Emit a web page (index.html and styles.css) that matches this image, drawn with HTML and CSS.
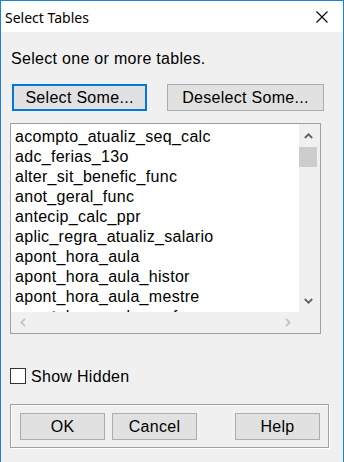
FILE: index.html
```html
<!DOCTYPE html>
<html>
<head>
<meta charset="utf-8">
<link rel="stylesheet" href="styles.css">
</head>
<body>
<div class="window">
  <div class="titlebar">
    <span class="title">Select Tables</span>
    <span class="close">
      <svg width="12" height="12" viewBox="0 0 12 12"><path d="M0.5 0.5 L11.5 11.5 M11.5 0.5 L0.5 11.5" stroke="#000" stroke-width="1.1" fill="none"/></svg>
    </span>
  </div>
  <div class="content">
    <div class="prompt">Select one or more tables.</div>
    <div class="btnrow">
      <button class="btn btn-default btn-select">Select Some...</button>
      <button class="btn btn-deselect">Deselect Some...</button>
    </div>
    <div class="listbox">
      <div class="items">
        <div class="item">acompto_atualiz_seq_calc</div>
        <div class="item">adc_ferias_13o</div>
        <div class="item">alter_sit_benefic_func</div>
        <div class="item">anot_geral_func</div>
        <div class="item">antecip_calc_ppr</div>
        <div class="item">aplic_regra_atualiz_salario</div>
        <div class="item">apont_hora_aula</div>
        <div class="item">apont_hora_aula_histor</div>
        <div class="item">apont_hora_aula_mestre</div>
        <div class="item">apont_hora_aula_prof</div>
      </div>
      <div class="vscroll">
        <div class="sbtn">
          <svg width="9" height="6" viewBox="0 0 9 6"><polyline points="0.8,5 4.5,1.3 8.2,5" stroke="#606060" stroke-width="1.8" fill="none"/></svg>
        </div>
        <div class="thumb"></div>
        <div class="track"></div>
        <div class="sbtn">
          <svg width="9" height="6" viewBox="0 0 9 6"><polyline points="0.8,1 4.5,4.7 8.2,1" stroke="#606060" stroke-width="1.8" fill="none"/></svg>
        </div>
      </div>
      <div class="hscroll">
        <div class="hbtn">
          <svg width="6" height="9" viewBox="0 0 6 9"><polyline points="5,0.8 1.3,4.5 5,8.2" stroke="#c4c4c4" stroke-width="1.8" fill="none"/></svg>
        </div>
        <div class="hbtn">
          <svg width="6" height="9" viewBox="0 0 6 9"><polyline points="1,0.8 4.7,4.5 1,8.2" stroke="#c4c4c4" stroke-width="1.8" fill="none"/></svg>
        </div>
      </div>
      <div class="corner"></div>
    </div>
    <label class="check">
      <span class="box"></span>
      <span class="check-label">Show Hidden</span>
    </label>
    <div class="group">
      <button class="btn btn-small">OK</button>
      <button class="btn btn-small">Cancel</button>
      <button class="btn btn-small btn-help">Help</button>
    </div>
  </div>
</div>
</body>
</html>
```
FILE: styles.css
```css
html, body {
  margin: 0;
  padding: 0;
}
body {
  width: 344px;
  height: 462px;
  overflow: hidden;
  background: #f0f0f0;
}
.window {
  box-sizing: border-box;
  width: 344px;
  height: 462px;
  border: 1px solid #1883d7;
  border-bottom: none;
  background: #f0f0f0;
  font-family: "Liberation Sans", Arial, sans-serif;
  font-size: 16px;
  letter-spacing: 0.3px;
  color: #000;
}
.titlebar {
  height: 31px;
  background: #fff;
  display: flex;
  align-items: center;
  justify-content: space-between;
}
.title {
  font-family: "Noto Sans", sans-serif;
  font-size: 14px;
  letter-spacing: 0;
  padding-left: 4px;
  padding-top: 1px;
}
.close {
  width: 12px;
  height: 12px;
  margin-right: 15px;
  margin-top: 1px;
  display: flex;
}
.content {
  display: flex;
  flex-direction: column;
  align-items: flex-start;
}
.prompt {
  margin-top: 18px;
  margin-left: 10px;
  line-height: 18px;
}
.btnrow {
  margin-top: 16px;
  margin-left: 11px;
  display: flex;
  gap: 20px;
}
.btn {
  box-sizing: border-box;
  height: 27px;
  background: #e1e1e1;
  border: 1px solid #adadad;
  font-family: inherit;
  font-size: 16px;
  letter-spacing: 0.3px;
  color: #000;
  padding: 0;
  margin: 0;
  line-height: 24px;
}
.btn-default {
  border: 2px solid #0078d7;
}
.btn-select {
  width: 135px;
}
.btn-deselect {
  width: 157px;
}
.listbox {
  margin-top: 12px;
  margin-left: 9px;
  box-sizing: border-box;
  width: 311px;
  height: 211px;
  border: 1px solid #a0a0a0;
  display: grid;
  grid-template-columns: 288px 21px;
  grid-template-rows: 188px 21px;
  background: #f0f0f0;
}
.items {
  background: #fff;
  overflow: hidden;
  padding-top: 3px;
}
.item {
  height: 20px;
  line-height: 20px;
  padding-left: 4px;
  white-space: nowrap;
}
.vscroll {
  display: flex;
  flex-direction: column;
  background: #f0f0f0;
}
.sbtn {
  height: 23px;
  display: flex;
  align-items: center;
  justify-content: center;
  padding-right: 2px;
}
.thumb {
  height: 20px;
  margin: 0 3px 0 0;
  background: #cdcdcd;
}
.track {
  flex: 1;
}
.hscroll {
  display: flex;
  justify-content: space-between;
  background: #f0f0f0;
}
.hbtn {
  width: 23px;
  display: flex;
  align-items: center;
  justify-content: center;
}
.corner {
  background: #f0f0f0;
}
.check {
  margin-top: 34px;
  margin-left: 9px;
  display: flex;
  align-items: center;
  gap: 5px;
  height: 16px;
}
.box {
  box-sizing: border-box;
  width: 16px;
  height: 16px;
  border: 1px solid #333;
  background: #fff;
}
.check-label {
  line-height: 16px;
  padding-top: 1px;
}
.group {
  margin-top: 20px;
  margin-left: 9px;
  box-sizing: border-box;
  width: 319px;
  height: 44px;
  border: 1px solid #a0a0a0;
  box-shadow: inset 1px 1px 0 #fff, 1px 1px 0 #fff;
  display: flex;
  align-items: flex-start;
  padding: 8px 8px 0 9px;
  gap: 7px;
}
.btn-small {
  width: 85px;
}
.btn-help {
  margin-left: auto;
}
```
